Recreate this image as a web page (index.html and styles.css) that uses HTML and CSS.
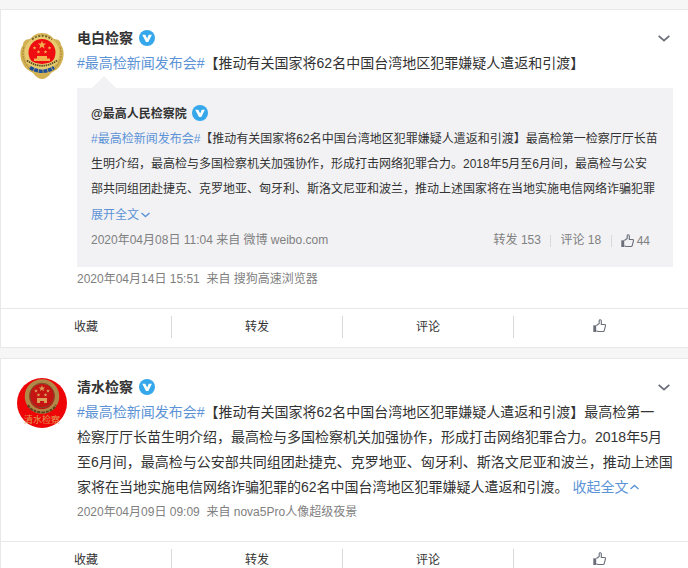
FILE: index.html
```html
<!DOCTYPE html>
<html lang="zh-CN">
<head>
  <meta charset="UTF-8">
  <meta name="viewport" content="width=device-width, initial-scale=1.0">
  <title>微博</title>
  <link rel="stylesheet" href="styles.css">
</head>
<body>
  <!-- shared icons -->
  <svg class="sprite">
    <symbol id="verified" viewBox="0 0 16 16">
      <circle cx="8" cy="8" r="8" fill="#35a7ea"/>
      <path d="M3.2 4.8h3.1L8.2 8.4l1.5-3.6h3.2L9.3 12H7z" fill="#fff"/>
    </symbol>
    <symbol id="like" viewBox="0 0 14 14">
      <path d="M0.3 6.3H3.2V13H0.3z" fill="#696e78"/>
      <path d="M3.4 6.5L6.2 4.4V1.4C6.2.4 8.2.4 8.3 1.8V5.5H11.6C12.3 5.5 12.6 6 12.5 6.6L11.3 11.4C11.1 12.2 10.8 12.5 10 12.5H5L3.4 11.8" fill="none" stroke="#696e78" stroke-width="1.1"/>
    </symbol>
    <symbol id="arrow" viewBox="0 0 12 7">
      <path d="M.7.8L6 5.6 11.3.8" fill="none" stroke="currentColor" stroke-width="1.8"/>
    </symbol>
    <symbol id="star" viewBox="-5 -5 10 10">
      <path d="M0-5L1.2-1.6H4.8L1.9.6 3 4 0 1.9-3 4-1.9.6-4.8-1.6H-1.2z"/>
    </symbol>
  </svg>

  <div class="card">
    <div class="feed">
      <div class="face">
        <svg width="50" height="50" viewBox="0 0 50 50">
          <path d="M25 4C31 4 34 7 37 10C42 10 44 13 44 16C48 21 47 30 44 35C42 40 37 42 34 44C31 48 28 50 25 50S19 48 16 44C13 42 8 40 6 35C3 30 2 21 6 16C6 13 8 10 13 10C16 7 19 4 25 4z" fill="#d3b254"/>
          <path d="M7 18C4 27 7 35 15 42M43 18C46 27 43 35 35 42" fill="none" stroke="#a98738" stroke-width="1" stroke-dasharray="2 1"/>
          <circle cx="25" cy="24" r="17.5" fill="#e6cb70"/>
          <path d="M15 10.5Q25 3 35 10.5" fill="none" stroke="#6d5c2c" stroke-width="1.8" stroke-dasharray="2 1.5"/>
          <circle cx="25" cy="23.5" r="13.5" fill="#ee0d10"/>
          <g fill="#f2b04e">
            <use href="#star" x="20.5" y="11.5" width="9" height="9"/>
            <use href="#star" x="15.5" y="17" width="4" height="4"/>
            <use href="#star" x="30.5" y="17" width="4" height="4"/>
            <use href="#star" x="19.5" y="21" width="4" height="4"/>
            <use href="#star" x="26.5" y="21" width="4" height="4"/>
            <path d="M20 27H30V29.5H33V32H17V29.5H20z"/>
          </g>
          <path d="M10 32Q25 42 40 32" fill="none" stroke="#e6cb70" stroke-width="4"/>
          <path d="M10 31.5Q25 42 40 31.5" fill="none" stroke="#5d4b22" stroke-width="1.8" stroke-dasharray="1.5 .7"/>
          <path d="M13 38.5Q25 46 37 38.5" fill="none" stroke="#1c4f97" stroke-width="3.6" stroke-dasharray="4 .7"/>
        </svg>
      </div>
      <div class="detail">
        <div class="name"><b>电白检察</b><svg class="v"><use href="#verified"/></svg><svg class="more"><use href="#arrow"/></svg></div>
        <p class="text"><a>#最高检新闻发布会#</a>【推动有关国家将62名中国台湾地区犯罪嫌疑人遣返和引渡】</p>
        <div class="quote">
          <div class="name"><b>@最高人民检察院</b><svg class="v"><use href="#verified"/></svg></div>
          <p class="text"><a>#最高检新闻发布会#</a>【推动有关国家将62名中国台湾地区犯罪嫌疑人遣返和引渡】最高检第一检察厅厅长苗<br>生明介绍，最高检与多国检察机关加强协作，形成打击网络犯罪合力。2018年5月至6月间，最高检与公安<br>部共同组团赴捷克、克罗地亚、匈牙利、斯洛文尼亚和波兰，推动上述国家将在当地实施电信网络诈骗犯罪</p>
          <a class="open">展开全文<svg class="fold"><use href="#arrow"/></svg></a>
          <div class="info">
            <span class="from">2020年04月08日 11:04 来自 微博 weibo.com</span>
            <ul class="count">
              <li>转发 153</li>
              <li>评论 18</li>
              <li><svg class="like"><use href="#like"/></svg><span>44</span></li>
            </ul>
          </div>
        </div>
        <p class="from">2020年04月14日 15:51&nbsp; 来自 搜狗高速浏览器</p>
      </div>
    </div>
    <ul class="handle">
      <li>收藏</li>
      <li>转发</li>
      <li>评论</li>
      <li><svg class="like"><use href="#like"/></svg></li>
    </ul>
  </div>

  <div class="card">
    <div class="feed">
      <div class="face">
        <svg width="50" height="50" viewBox="0 0 50 50">
          <circle cx="25" cy="25" r="25" fill="#ee0508"/>
          <circle cx="25" cy="18.5" r="15" fill="#c51512" stroke="#b08848" stroke-width="4.5"/>
          <path d="M11 27Q14 33.5 25 34.5Q36 33.5 39 27" fill="none" stroke="#5e401f" stroke-width="2" stroke-dasharray="3 1"/>
          <circle cx="25" cy="17.5" r="12.3" fill="none" stroke="#7d4b2a" stroke-width="1"/>
          <g fill="#dba05a">
            <use href="#star" x="21.5" y="7" width="7" height="7"/>
            <use href="#star" x="17" y="11" width="4" height="4"/>
            <use href="#star" x="29" y="11" width="4" height="4"/>
            <use href="#star" x="19.5" y="15" width="4" height="4"/>
            <use href="#star" x="26.5" y="15" width="4" height="4"/>
            <path d="M20 20H30V25H27V23H23V25H20z"/>
          </g>
          <text class="seal" x="25" y="45" text-anchor="middle">清水检察</text>
        </svg>
      </div>
      <div class="detail">
        <div class="name"><b>清水检察</b><svg class="v"><use href="#verified"/></svg><svg class="more"><use href="#arrow"/></svg></div>
        <p class="text"><a>#最高检新闻发布会#</a>【推动有关国家将62名中国台湾地区犯罪嫌疑人遣返和引渡】最高检第一<br>检察厅厅长苗生明介绍，最高检与多国检察机关加强协作，形成打击网络犯罪合力。2018年5月<br>至6月间，最高检与公安部共同组团赴捷克、克罗地亚、匈牙利、斯洛文尼亚和波兰，推动上述国<br>家将在当地实施电信网络诈骗犯罪的62名中国台湾地区犯罪嫌疑人遣返和引渡。 <a>收起全文<svg class="fold up"><use href="#arrow"/></svg></a></p>
        <p class="from">2020年04月09日 09:09&nbsp; 来自 nova5Pro人像超级夜景</p>
      </div>
    </div>
    <ul class="handle">
      <li>收藏</li>
      <li>转发</li>
      <li>评论</li>
      <li><svg class="like"><use href="#like"/></svg></li>
    </ul>
  </div>
</body>
</html>
```
FILE: styles.css
```css
html, body, p, ul {
  margin: 0;
  padding: 0;
}

html {
  overflow: hidden;
}
body {
  padding-top: 9px;
  background-color: #f6f6f6;
  color: #333;
  font: 12px/25px "Liberation Sans", "Noto Sans CJK SC", sans-serif;
  white-space: nowrap;
}
ul {
  list-style: none;
}
a {
  color: #5c93d6;
}
.sprite {
  display: none;
}

.card {
  margin-bottom: 10px;
  border: 1px solid #e8e8e8;
  border-right: 0;
  background-color: #fff;
}
.feed {
  display: flex;
  padding: 16px 15px 16px 16px;
}
.face {
  width: 60px;
  height: 50px;
  padding-top: 3px;
}
.face svg {
  display: block;
}
.seal {
  fill: #e39a50;
  font: 9px "Noto Sans CJK SC", sans-serif;
}
.detail {
  flex: none;
  width: 596px;
}

.name {
  display: flex;
  align-items: center;
  height: 25px;
  font-size: 14px;
}
.v {
  width: 16px;
  height: 16px;
  margin: -1px 0 0 6px;
}
.more {
  width: 12px;
  height: 7px;
  margin-left: auto;
  margin-right: 3px;
  color: #696e78;
}
.text {
  font-size: 14px;
}
.fold {
  width: 9px;
  height: 6px;
  margin-left: 2px;
  vertical-align: 1px;
}
.up {
  vertical-align: 2px;
  transform: rotate(180deg);
}

.quote {
  position: relative;
  height: 165px;
  margin-top: 12px;
  padding: 14px 14px 0;
  background-color: #f2f2f5;
}
/* little triangle above the quoted post */
.quote::before {
  content: "";
  position: absolute;
  top: -12px;
  left: 15px;
  border: 12px solid transparent;
  border-top: 0;
  border-bottom-color: #f2f2f5;
}
.quote .name,
.quote .text {
  font-size: 12px;
}
.quote .v {
  margin: -3px 0 0 5px;
}
.open {
  display: block;
  height: 26px;
  line-height: 27px;
}
.info {
  display: flex;
  justify-content: space-between;
}
.from,
.count {
  color: #808080;
}
.count {
  display: flex;
  align-items: center;
  margin-right: 9px;
}
.count li {
  display: flex;
  align-items: center;
  height: 12px;
}
.count li + li {
  margin-left: 9.5px;
  padding-left: 9px;
  border-left: 1px solid #d9d9d9;
}
.count span {
  margin: 2px 0 0 2px;
}
.like {
  width: 14px;
  height: 14px;
}

.handle {
  display: grid;
  grid-template-columns: repeat(4, 171px);
  height: 38px;
  border-top: 1px solid #e8e8e8;
}
.handle li {
  display: flex;
  align-items: center;
  justify-content: center;
  height: 22px;
  margin-top: 7px;
  border-right: 1px solid #d9d9d9;
}
.handle li:last-child {
  border-right: 0;
}
.handle .like {
  margin-top: -2px;
}
```
